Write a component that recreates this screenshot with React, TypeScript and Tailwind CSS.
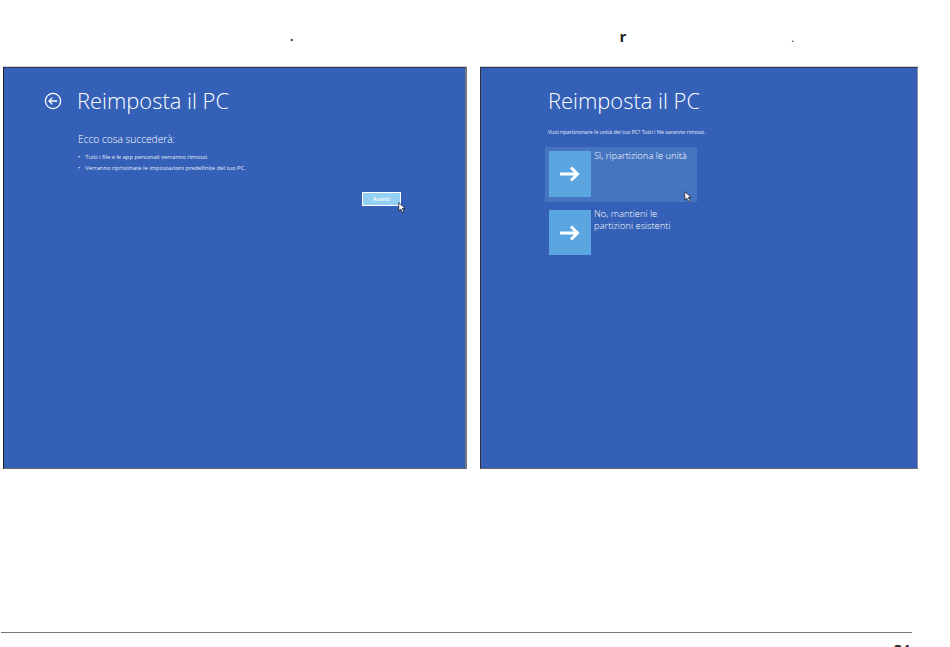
const font = "font-['Open_Sans','Noto_Sans',sans-serif]";

function Cursor({ className }: { className: string }) {
  return (
    <svg viewBox="0 0 12 17" className={`absolute h-[11px] w-[8px] ${className}`}>
      <path d="M1 1 L1 14 L4 11 L6.5 16 L9 15 L6.5 10 L11 10 Z" fill="#fff" stroke="#1a1a2a" strokeWidth="1.2" />
    </svg>
  );
}

function OptionTile({ lines, active }: { lines: string[]; active?: boolean }) {
  return (
    <div className={`relative flex w-[152px] gap-[3px] p-[4px] ${active ? "h-[55px] bg-[#4575c0]" : ""}`}>
      <div className={`flex w-[42px] shrink-0 items-center justify-center bg-[#5ba6e0] ${active ? "h-[46px]" : "h-[45px]"}`}>
        <svg viewBox="0 0 20 16" className="h-[16px] w-[20px]" fill="none" stroke="#fff" strokeWidth="3">
          <path d="M0 8 H17.5 M11 1.5 L17.5 8 L11 14.5" />
        </svg>
      </div>
      <div className={`text-[9.4px] leading-[12px] font-light text-white ${active ? "-mt-[1px]" : "-mt-[2px]"}`}>
        {lines.map((l) => (
          <div key={l}>{l}</div>
        ))}
      </div>
      {active ? <Cursor className="top-[44px] left-[139px]" /> : null}
    </div>
  );
}

export default function App() {
  return (
    <div className={`${font} relative h-[647px] w-[950px] overflow-hidden bg-white`}>
      <div className="flex h-[67px] text-[12px] leading-none font-bold text-[#222]">
        <span className="mt-[31px] ml-[290px]">.</span>
        <span className="mt-[29px] ml-[326px] text-[15px]">r</span>
        <span className="mt-[32px] ml-[165px] text-[11px] font-normal">.</span>
      </div>

      <div className="flex items-start">
        <section className="ml-[3px] h-[402px] w-[464px] border border-r-2 border-t-[#2b3a5e] border-r-[#77777f] border-b-[#666] border-l-[#222] bg-[#3461b7] text-white shadow-[0_-1px_0_#d0d0d0]">
          <div className="flex items-center pt-[18px] pl-[40px]">
            <svg viewBox="0 0 18 18" className="h-[18px] w-[18px]" fill="none" stroke="#fff" strokeWidth="1.3">
              <circle cx="9" cy="9" r="7.6" />
              <path d="M13.2 9 H5 M8.4 5.6 L5 9 L8.4 12.4" />
            </svg>
            <h1 className="ml-[15px] text-[21.9px] leading-[30px] font-light whitespace-nowrap">Reimposta il PC</h1>
          </div>
          <div className="pt-[16px] pl-[74px]">
            <p className="text-[10.2px] leading-[14px] font-light text-white">Ecco cosa succederà:</p>
            <ul className="mt-[6px] text-[5.8px] leading-[10.5px] text-[#e6ecf8]">
              <li className="flex gap-[5px]"><span>•</span><span>Tutti i file e le app personali verranno rimossi.</span></li>
              <li className="flex gap-[5px]"><span>•</span><span>Verranno ripristinate le impostazioni predefinite del tuo PC.</span></li>
            </ul>
            <div className="relative mt-[19px] ml-[284px] w-[39px]">
              <div className="flex h-[14px] items-center justify-center border border-white bg-[#93d0f3] text-[5.5px] font-semibold text-white">
                Avanti
              </div>
              <Cursor className="top-[10px] left-[36px]" />
            </div>
          </div>
        </section>

        <section className="ml-[13px] h-[402px] w-[438px] border border-t-[#2b3a5e] border-r-[#8a8f9c] border-b-[#666] border-l-[#333] bg-[#3461b7] text-white shadow-[0_-1px_0_#d0d0d0]">
          <div className="pt-[18px] pl-[67px]">
            <h1 className="text-[21.9px] leading-[30px] font-light whitespace-nowrap">Reimposta il PC</h1>
            <p className="mt-[12px] text-[5.2px] leading-[8px] whitespace-nowrap text-[#e8eefa]">
              Vuoi ripartizionare le unità del tuo PC? Tutti i file saranno rimossi.
            </p>
          </div>
          <div className="mt-[11px] ml-[64px] flex flex-col gap-[4px]">
            <OptionTile lines={["Sì, ripartiziona le unità"]} active />
            <OptionTile lines={["No, mantieni le", "partizioni esistenti"]} />
          </div>
        </section>
      </div>

      <footer className="mt-[163px] ml-[1px] w-[911px] border-t border-[#777]">
        <p className="mt-[10px] pr-[2px] text-right text-[14px] leading-[14px] font-bold text-[#222]">34</p>
      </footer>
    </div>
  );
}
